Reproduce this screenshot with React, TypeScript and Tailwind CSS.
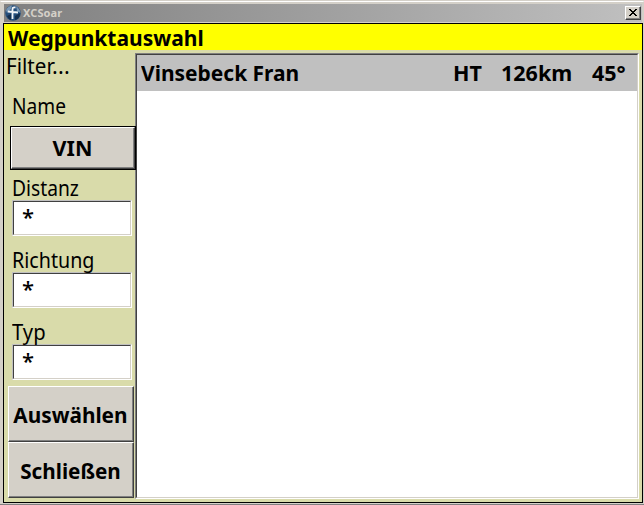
import React from 'react';

function Label({ text, scale }: { text: string; scale: string }) {
  return (
    <div className={`h-[24px] w-max origin-left text-[21.5px] leading-[24px] whitespace-nowrap ${scale}`}>{text}</div>
  );
}

function Field({ label, scale }: { label: string; scale: string }) {
  return (
    <div className="h-[72px] pl-[8px]">
      <Label text={label} scale={scale} />
      <div className="h-[36px] w-[120px] border border-t-[#c0c0c0] border-l-[#c0c0c0] border-r-white border-b-white">
        <div className="h-full border border-t-[#404040] border-l-[#404040] border-r-[#d4d0c8] border-b-[#d4d0c8] bg-white pl-[8px] text-[22px] leading-[28px] font-medium">
          *
        </div>
      </div>
    </div>
  );
}

function Action({ label, scale }: { label: string; scale: string }) {
  return (
    <button className="block h-[56px] w-[126px] border border-t-white border-l-white border-r-[#404040] border-b-[#404040]">
      <span className="flex h-full items-center justify-center border-r border-b border-[#808080] bg-[#d4d0c8] text-[22px] leading-[24px] font-bold whitespace-nowrap">
        <span className={scale}>{label}</span>
      </span>
    </button>
  );
}

export default function App() {
  return (
    <div className="h-[505px] w-[644px] overflow-hidden bg-[#d4d0c8] font-['Noto_Sans',sans-serif] text-black">
      <div className="flex h-full flex-col border-t border-b border-t-[#d4d0c8] border-b-[#808080]">
        <div className="flex h-full flex-col border-t border-r border-b border-l border-t-white border-r-[#d4d0c8] border-b-[#d4d0c8] border-l-[#d4d0c8] pt-[2px] pl-[1px]">
          <div className="mr-[1px] ml-[2px] flex h-[18px] shrink-0 items-center bg-gradient-to-r from-[#808080] to-[#c0c0c0] pr-[1px]">
            <svg viewBox="0 0 16 16" className="ml-[1px] h-4 w-4 shrink-0">
              <circle cx="8" cy="8" r="7.8" fill="#254e7b" />
              <path d="M1 5 Q3 1 7 .4 L6 4 L2 8Z M11 1 Q15 4 15.5 8 L12 6Z" fill="#7797b4" />
              <path d="M2 11 L6 9 L6 15 Q3 14 2 11Z M10 11 L15 8 Q15 14 10 15Z" fill="#142e4c" />
              <path d="M7.5 14 V4 Q7.5 2 10.5 2.5 M3 6.5 L13 7.5" fill="none" stroke="#f2f4f6" strokeWidth="1.8" />
            </svg>
            <span className="ml-[2px] text-[11px] leading-[16px] font-bold tracking-[0.1px] text-[#d4d0c8]">XCSoar</span>
            <button className="ml-auto h-[14px] w-[16px] border border-t-white border-l-white border-r-[#404040] border-b-[#404040]">
              <span className="flex h-full items-center justify-center border-r border-b border-[#808080] bg-[#d4d0c8]">
                <svg viewBox="0 0 8 7" className="h-[7px] w-[8px]" shapeRendering="crispEdges">
                  <path d="M0 0h2v1h1v1h2V1h1V0h2v1H7v1H6v1H5v1h1v1h1v1h1v1H6V6H5V5H3v1H2v1H0V6h1V5h1V4h1V3H2V2H1V1H0z" />
                </svg>
              </span>
            </button>
          </div>
          <main className="mt-[1px] ml-[1px] flex min-h-0 flex-1 flex-col border border-black bg-[#d9dbaa]">
            <h1 className="h-[26px] shrink-0 bg-[#ffff00] pl-[4px] text-[22px] leading-[27px] font-bold whitespace-nowrap">
              <span className="block w-max origin-left scale-x-[0.955]">Wegpunktauswahl</span>
            </h1>
            <div className="flex min-h-0 flex-1">
              <aside className="relative z-10 w-[131px] shrink-0">
                <div className="flex h-[40px] pt-[4px] pl-[2px] text-[21.5px] leading-[24px] whitespace-nowrap">
                  <span className="block h-[24px] w-[46px] origin-left scale-x-[0.96]">Filter</span>
                  <span className="tracking-[0.3px]">...</span>
                </div>
                <div className="h-[36px] pt-[4px] pl-[8px]">
                  <Label text="Name" scale="scale-x-[0.89]" />
                </div>
                <button className="ml-[6px] block h-[44px] w-[126px] border border-black">
                  <span className="flex h-full items-center justify-center border border-t-white border-l-white border-r-[#404040] border-b-[#404040] bg-[#d4d0c8]">
                    <span className="flex h-full w-full items-center justify-center border-r border-b border-[#808080] text-[21.5px] leading-[24px] font-bold">
                      VIN
                    </span>
                  </span>
                </button>
                <div className="pt-[6px]">
                  <Field label="Distanz" scale="scale-x-[0.895]" />
                  <Field label="Richtung" scale="scale-x-[0.915]" />
                  <Field label="Typ" scale="scale-x-[0.94]" />
                </div>
                <div className="-mt-[6px] ml-[4px]">
                  <Action label="Auswählen" scale="scale-x-[0.945]" />
                  <Action label="Schließen" scale="scale-x-[0.94]" />
                </div>
              </aside>
              <section className="mt-[3px] mr-[3px] mb-[3px] min-w-0 flex-1 border border-t-[#808080] border-r-white border-b-white border-l-[#808080]">
                <div className="h-full border border-t-[#404040] border-r-[#d4d0c8] border-b-[#d4d0c8] border-l-[#404040] bg-white">
                  <div className="flex h-[36px] bg-[#c0c0c0] pr-[9px] pl-[4px] text-[21.5px] leading-[36px] font-bold whitespace-nowrap">
                    <span className="w-[312px]">
                      <span className="block w-max origin-left scale-x-[0.975]">Vinsebeck Fran</span>
                    </span>
                    <span className="w-[48px]">HT</span>
                    <span className="w-[91px]">126km</span>
                    <span>45°</span>
                  </div>
                </div>
              </section>
            </div>
          </main>
        </div>
      </div>
    </div>
  );
}
